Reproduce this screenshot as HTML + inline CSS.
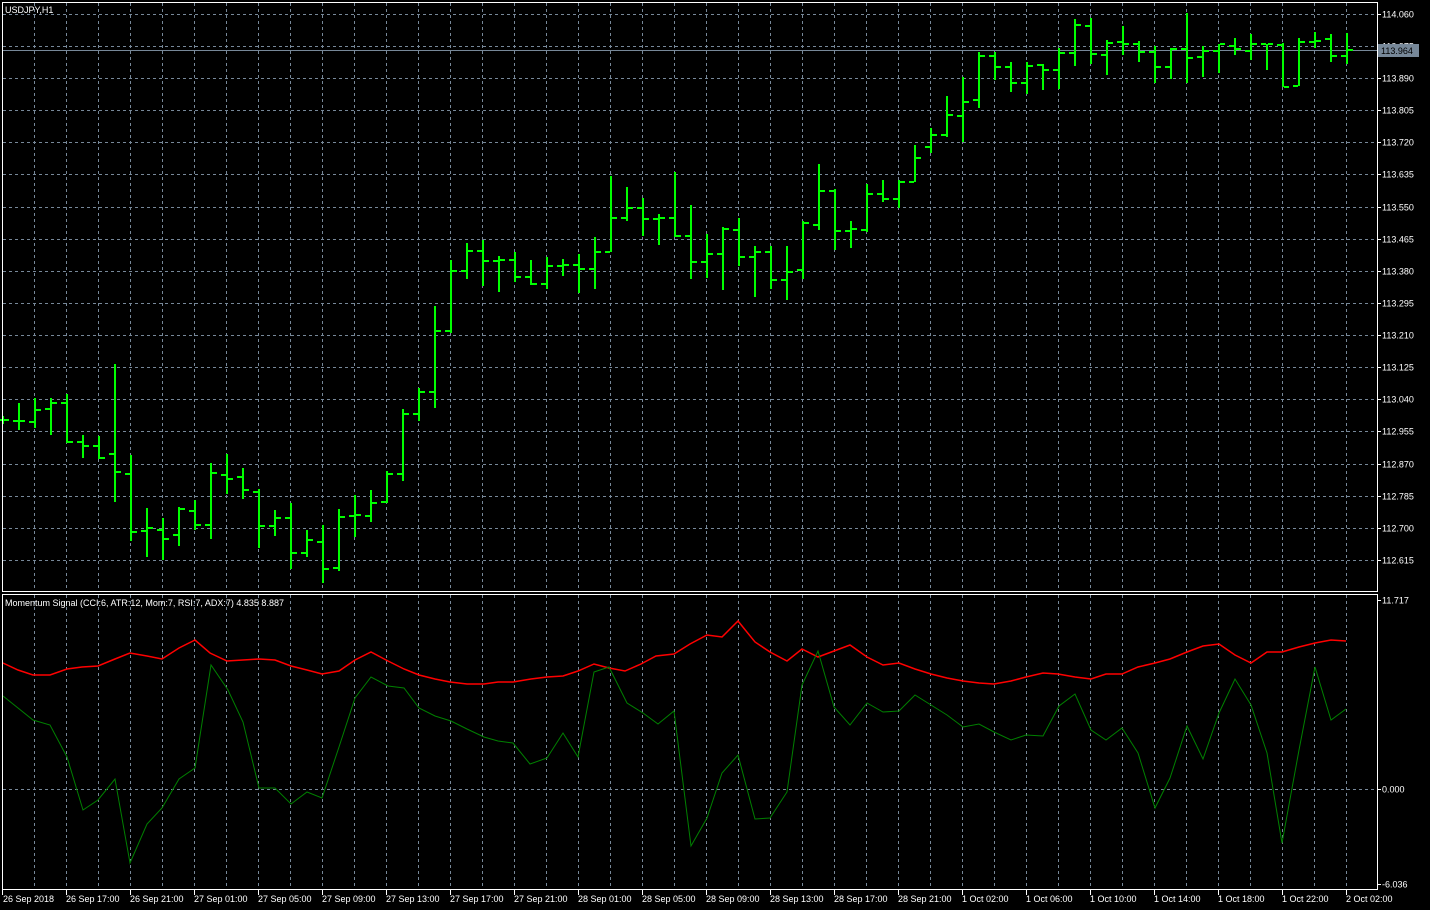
<!DOCTYPE html>
<html><head><meta charset="utf-8"><style>
html,body{margin:0;padding:0;background:#000;width:1430px;height:910px;overflow:hidden}
svg{display:block}
text{font-family:"Liberation Sans","DejaVu Sans",sans-serif;font-size:9px;fill:#fff}
</style></head><body>
<svg width="1430" height="910" viewBox="0 0 1430 910" xmlns="http://www.w3.org/2000/svg">
<rect width="1430" height="910" fill="#000"/>
<g stroke="#778899" stroke-width="1" stroke-dasharray="3,3" fill="none" shape-rendering="crispEdges">
<path d="M34.5 3V591M66.5 3V591M98.5 3V591M130.5 3V591M162.5 3V591M194.5 3V591M226.5 3V591M258.5 3V591M290.5 3V591M322.5 3V591M354.5 3V591M386.5 3V591M418.5 3V591M450.5 3V591M482.5 3V591M514.5 3V591M546.5 3V591M578.5 3V591M610.5 3V591M642.5 3V591M674.5 3V591M706.5 3V591M738.5 3V591M770.5 3V591M802.5 3V591M834.5 3V591M866.5 3V591M898.5 3V591M930.5 3V591M962.5 3V591M994.5 3V591M1026.5 3V591M1058.5 3V591M1090.5 3V591M1122.5 3V591M1154.5 3V591M1186.5 3V591M1218.5 3V591M1250.5 3V591M1282.5 3V591M1314.5 3V591M1346.5 3V591"/>
<path d="M34.5 595V889M66.5 595V889M98.5 595V889M130.5 595V889M162.5 595V889M194.5 595V889M226.5 595V889M258.5 595V889M290.5 595V889M322.5 595V889M354.5 595V889M386.5 595V889M418.5 595V889M450.5 595V889M482.5 595V889M514.5 595V889M546.5 595V889M578.5 595V889M610.5 595V889M642.5 595V889M674.5 595V889M706.5 595V889M738.5 595V889M770.5 595V889M802.5 595V889M834.5 595V889M866.5 595V889M898.5 595V889M930.5 595V889M962.5 595V889M994.5 595V889M1026.5 595V889M1058.5 595V889M1090.5 595V889M1122.5 595V889M1154.5 595V889M1186.5 595V889M1218.5 595V889M1250.5 595V889M1282.5 595V889M1314.5 595V889M1346.5 595V889"/>
<path d="M3 14.5H1377M3 46.5H1377M3 78.5H1377M3 110.5H1377M3 142.5H1377M3 174.5H1377M3 207.5H1377M3 239.5H1377M3 271.5H1377M3 303.5H1377M3 335.5H1377M3 367.5H1377M3 399.5H1377M3 431.5H1377M3 464.5H1377M3 496.5H1377M3 528.5H1377M3 560.5H1377M3 789.5H1377"/>
</g>
<path d="M3 50.5H1377" stroke="#778899" stroke-width="1" shape-rendering="crispEdges"/>
<path fill="none" stroke="#00ff00" stroke-width="2" shape-rendering="crispEdges" d="
M3 416V424M-3 420H2M4 420H9
M19 403V430M13 421H18M20 421H25
M35 398V428M29 422H34M36 410H41
M51 398V435M45 409H50M52 403H57
M67 394V443M61 403H66M68 442H73
M83 435V458M77 442H82M84 446H89
M99 436V459M93 446H98M100 458H105
M115 364V502M109 454H114M116 472H121
M131 455V541M125 474H130M132 532H137
M147 508V557M141 531H146M148 528H153
M163 518V560M157 530H162M164 539H169
M179 507V546M173 535H178M180 509H185
M195 500V530M189 511H194M196 525H201
M211 463V539M205 525H210M212 473H217
M227 454V494M221 475H226M228 479H233
M243 468V499M237 477H242M244 490H249
M259 489V548M253 492H258M260 526H265
M275 510V536M269 526H274M276 518H281
M291 503V569M285 518H290M292 553H297
M307 530V557M301 553H306M308 540H313
M323 525V583M317 542H322M324 569H329
M339 509V571M333 568H338M340 517H345
M355 495V537M349 516H354M356 515H361
M371 490V522M365 516H370M372 503H377
M387 471V503M381 502H386M388 474H393
M403 409V481M397 474H402M404 414H409
M419 388V421M413 414H418M420 392H425
M435 306V408M429 392H434M436 331H441
M451 260V333M445 331H450M452 271H457
M467 243V279M461 271H466M468 251H473
M483 240V286M477 251H482M484 261H489
M499 256V292M493 261H498M500 260H505
M515 252V282M509 260H514M516 277H521
M531 260V285M525 277H530M532 284H537
M547 257V289M541 284H546M548 266H553
M563 259V276M557 266H562M564 265H569
M579 254V293M573 265H578M580 269H585
M595 237V289M589 269H594M596 252H601
M611 176V252M605 252H610M612 218H617
M627 187V221M621 218H626M628 208H633
M643 198V236M637 208H642M644 219H649
M659 214V245M653 219H658M660 218H665
M675 172V237M669 218H674M676 236H681
M691 205V279M685 236H690M692 262H697
M707 234V278M701 262H706M708 254H713
M723 227V290M717 254H722M724 229H729
M739 218V266M733 230H738M740 257H745
M755 246V297M749 257H754M756 252H761
M771 246V289M765 252H770M772 280H777
M787 246V300M781 280H786M788 272H793
M803 221V279M797 270H802M804 223H809
M819 164V230M813 225H818M820 191H825
M835 189V250M829 191H834M836 231H841
M851 221V248M845 231H850M852 229H857
M867 184V232M861 230H866M868 194H873
M883 180V202M877 194H882M884 199H889
M899 180V208M893 199H898M900 182H905
M915 145V182M909 182H914M916 158H921
M931 128V153M925 147H930M932 135H937
M947 96V137M941 135H946M948 115H953
M963 77V142M957 116H962M964 102H969
M979 52V108M973 100H978M980 56H985
M995 52V80M989 56H994M996 67H1001
M1011 62V92M1005 67H1010M1012 83H1017
M1027 62V94M1021 83H1026M1028 66H1033
M1043 64V90M1037 65H1042M1044 70H1049
M1059 48V89M1053 70H1058M1060 53H1065
M1075 19V66M1069 53H1074M1076 25H1081
M1091 18V64M1085 26H1090M1092 54H1097
M1107 40V75M1101 55H1106M1108 43H1113
M1123 26V55M1117 42H1122M1124 44H1129
M1139 41V62M1133 44H1138M1140 52H1145
M1155 46V83M1149 52H1154M1156 67H1161
M1171 48V79M1165 67H1170M1172 49H1177
M1187 13V83M1181 49H1186M1188 58H1193
M1203 46V77M1197 57H1202M1204 51H1209
M1219 44V73M1213 51H1218M1220 44H1225
M1235 38V55M1229 46H1234M1236 49H1241
M1251 34V60M1245 51H1250M1252 44H1257
M1267 44V70M1261 44H1266M1268 44H1273
M1283 43V87M1277 45H1282M1284 87H1289
M1299 38V86M1293 86H1298M1300 42H1305
M1315 32V48M1309 42H1314M1316 41H1321
M1331 34V62M1325 39H1330M1332 56H1337
M1347 33V64M1341 56H1346M1348 50H1353"/>
<polyline fill="none" stroke="#ff0000" stroke-width="1.5" points="3,663 18,670 33,675 50,675 67,669 82,667 98,666 115,659 130,653 147,656 162,659 179,648 195,640 210,653 227,661 243,660 259,659 275,660 291,666 307,670 322,674 339,671 355,660 371,652 388,661 404,669 419,675 435,679 450,682 467,684 484,684 498,682 513,682 531,679 547,677 563,676 578,671 594,664 609,668 625,671 641,664 656,656 674,654 690,644 707,635 722,637 738,621 755,642 770,652 787,661 802,649 818,657 834,651 850,645 867,657 883,665 899,663 915,669 931,674 947,678 963,681 979,683 994,684 1011,681 1026,677 1043,673 1058,674 1075,677 1091,679 1106,674 1122,674 1138,667 1155,663 1170,659 1187,652 1203,646 1219,644 1235,655 1251,663 1267,652 1282,652 1299,647 1315,643 1331,640 1346,641"/>
<polyline fill="none" stroke="#008000" stroke-width="1" points="3,696 18,708 33,720 50,725 67,757 83,810 98,800 115,779 130,863 147,824 162,808 179,779 195,768 211,665 228,690 243,722 259,788 275,788 291,804 307,792 322,798 339,747 355,698 371,677 388,686 404,688 419,708 435,716 451,721 467,729 484,737 498,741 513,743 530,764 547,758 563,733 578,757 594,672 609,667 627,703 643,713 658,724 674,711 691,846 707,818 722,773 738,755 755,819 770,818 787,792 802,685 818,651 834,707 850,725 867,703 883,712 899,711 915,695 931,705 947,715 963,727 979,724 994,732 1011,740 1026,735 1043,736 1059,706 1075,694 1091,730 1106,740 1122,728 1138,753 1155,808 1170,778 1187,726 1203,759 1219,713 1235,679 1251,705 1267,753 1282,843 1299,750 1315,667 1331,720 1346,709"/>
<g stroke="#fff" stroke-width="1" fill="none" shape-rendering="crispEdges">
<rect x="2.5" y="2.5" width="1375" height="589"/>
<rect x="2.5" y="594.5" width="1375" height="295"/>
<path d="M1377 14.5H1381M1377 46.5H1381M1377 78.5H1381M1377 110.5H1381M1377 142.5H1381M1377 174.5H1381M1377 207.5H1381M1377 239.5H1381M1377 271.5H1381M1377 303.5H1381M1377 335.5H1381M1377 367.5H1381M1377 399.5H1381M1377 431.5H1381M1377 464.5H1381M1377 496.5H1381M1377 528.5H1381M1377 560.5H1381M1377 600.5H1381M1377 789.5H1381M1377 884.5H1381"/>
<path d="M2.5 889V895M66.5 889V895M130.5 889V895M194.5 889V895M258.5 889V895M322.5 889V895M386.5 889V895M450.5 889V895M514.5 889V895M578.5 889V895M642.5 889V895M706.5 889V895M770.5 889V895M834.5 889V895M898.5 889V895M962.5 889V895M1026.5 889V895M1090.5 889V895M1154.5 889V895M1218.5 889V895M1282.5 889V895M1346.5 889V895"/>
</g>
<text x="5" y="13">USDJPY,H1</text>
<text x="5" y="606">Momentum Signal (CCI:6, ATR:12, Mom:7, RSI:7, ADX:7) 4.835 8.887</text>
<g>
<text x="1382" y="17.5">114.060</text>
<text x="1382" y="49.5">113.975</text>
<text x="1382" y="81.5">113.890</text>
<text x="1382" y="113.5">113.805</text>
<text x="1382" y="145.5">113.720</text>
<text x="1382" y="177.5">113.635</text>
<text x="1382" y="210.5">113.550</text>
<text x="1382" y="242.5">113.465</text>
<text x="1382" y="274.5">113.380</text>
<text x="1382" y="306.5">113.295</text>
<text x="1382" y="338.5">113.210</text>
<text x="1382" y="370.5">113.125</text>
<text x="1382" y="402.5">113.040</text>
<text x="1382" y="434.5">112.955</text>
<text x="1382" y="467.5">112.870</text>
<text x="1382" y="499.5">112.785</text>
<text x="1382" y="531.5">112.700</text>
<text x="1382" y="563.5">112.615</text>
<text x="1382" y="603.5">11.717</text>
<text x="1382" y="792.5">0.000</text>
<text x="1382" y="887.5">-6.036</text>
</g>
<rect x="1378" y="44" width="41" height="13" fill="#778899"/>
<text x="1381" y="54" style="fill:#000">113.964</text>
<g>
<text x="3" y="902">26 Sep 2018</text>
<text x="66" y="902">26 Sep 17:00</text>
<text x="130" y="902">26 Sep 21:00</text>
<text x="194" y="902">27 Sep 01:00</text>
<text x="258" y="902">27 Sep 05:00</text>
<text x="322" y="902">27 Sep 09:00</text>
<text x="386" y="902">27 Sep 13:00</text>
<text x="450" y="902">27 Sep 17:00</text>
<text x="514" y="902">27 Sep 21:00</text>
<text x="578" y="902">28 Sep 01:00</text>
<text x="642" y="902">28 Sep 05:00</text>
<text x="706" y="902">28 Sep 09:00</text>
<text x="770" y="902">28 Sep 13:00</text>
<text x="834" y="902">28 Sep 17:00</text>
<text x="898" y="902">28 Sep 21:00</text>
<text x="962" y="902">1 Oct 02:00</text>
<text x="1026" y="902">1 Oct 06:00</text>
<text x="1090" y="902">1 Oct 10:00</text>
<text x="1154" y="902">1 Oct 14:00</text>
<text x="1218" y="902">1 Oct 18:00</text>
<text x="1282" y="902">1 Oct 22:00</text>
<text x="1346" y="902">2 Oct 02:00</text>
</g>
</svg>
</body></html>
